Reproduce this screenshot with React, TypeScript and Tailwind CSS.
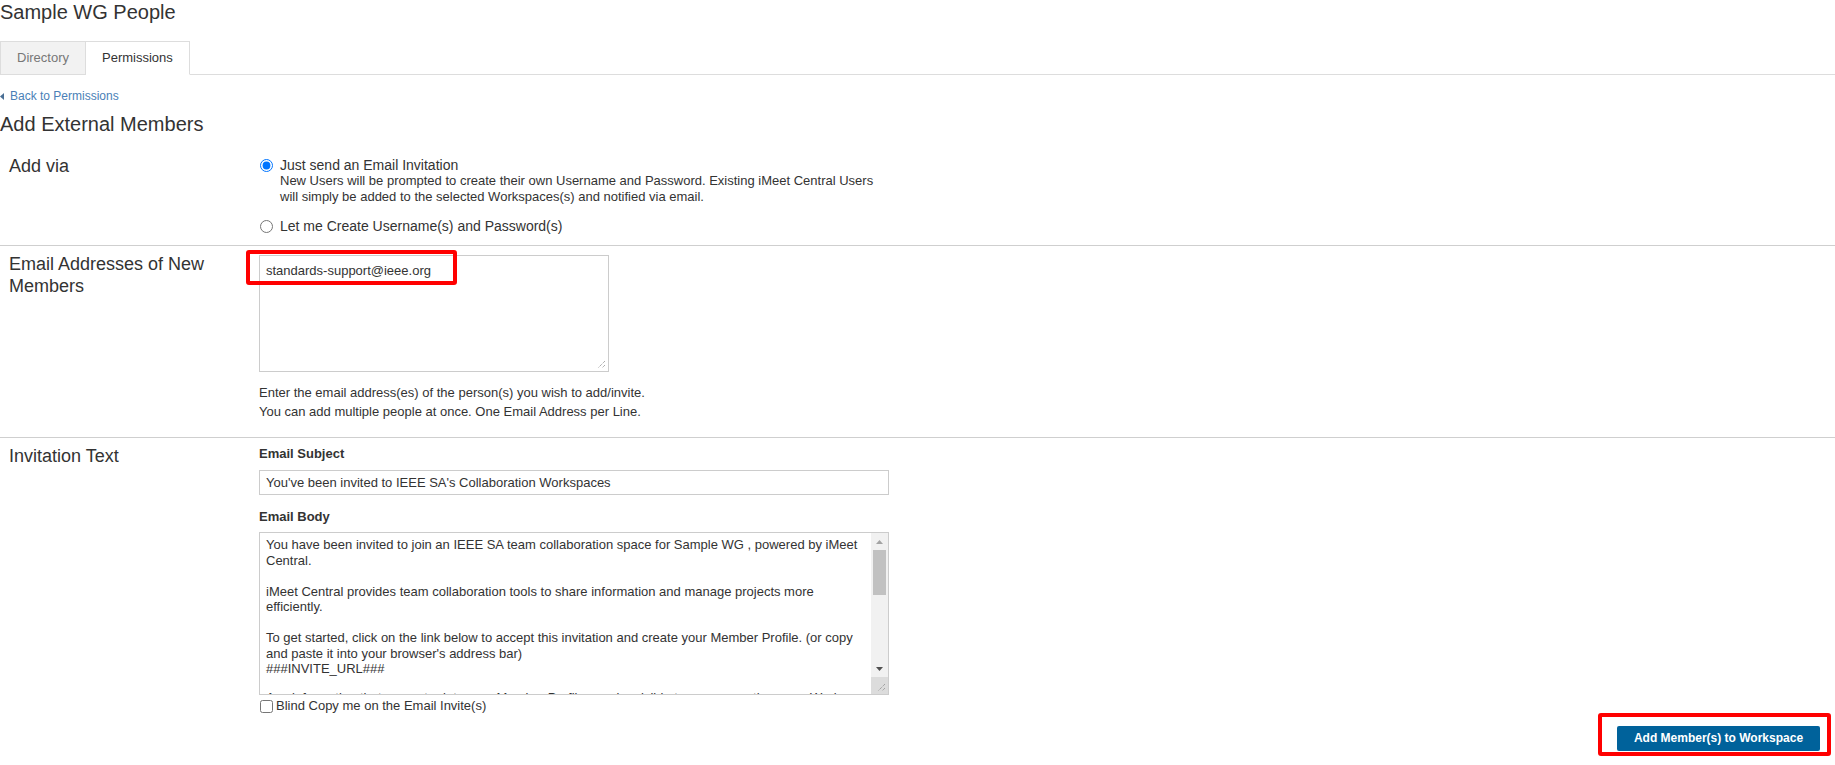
import { useState } from "react";

const FONT = { fontFamily: '"Liberation Sans", Arial, Helvetica, sans-serif' };

const bodyLines = [
  "You have been invited to join an IEEE SA team collaboration space for Sample WG , powered by iMeet",
  "Central.",
  "",
  "iMeet Central provides team collaboration tools to share information and manage projects more",
  "efficiently.",
  "",
  "To get started, click on the link below to accept this invitation and create your Member Profile. (or copy",
  "and paste it into your browser's address bar)",
  "###INVITE_URL###",
];

const Grip = () => (
  <svg width="9" height="9" viewBox="0 0 9 9" className="absolute right-[2px] bottom-[2px]">
    <path d="M8 1 L1 8 M8 5 L5 8" stroke="#8a8a8a" strokeWidth="1" strokeDasharray="1 1" />
  </svg>
);

const Section = ({ label, children, first }: { label: string; children: React.ReactNode; first?: boolean }) => (
  <div className={first ? "flex items-start" : "flex items-start border-t border-[#cfcfcf]"}>
    <div className={first ? "w-[259px] shrink-0 pl-[9px] pr-2 pt-[19px] text-[18px] leading-[22px] text-[#333]" : "w-[259px] shrink-0 pl-[9px] pr-2 pt-[7px] text-[18px] leading-[22px] text-[#333]"}>
      {label}
    </div>
    {children}
  </div>
);

export default function App() {
  const [via, setVia] = useState("email");
  const [bcc, setBcc] = useState(false);

  return (
    <div className="min-h-screen bg-white text-[#333]" style={FONT}>
      <h1 className="text-[20px] leading-6 font-normal">Sample WG People</h1>

      <div className="mt-[17px] flex items-end border-b border-[#ddd]">
        <div className="-mb-px flex h-[34px] items-center border border-[#ddd] bg-[#f2f2f2] px-4 text-[13px] text-[#777]">
          Directory
        </div>
        <div className="-mb-px flex h-[34px] items-center border border-[#ddd] border-b-white border-l-0 bg-white px-4 text-[13px] text-[#333]">
          Permissions
        </div>
      </div>

      <div className="mt-[13px] flex h-4 items-center gap-[6px] text-[12px] text-[#4a7fb7]">
        <svg width="4" height="7" viewBox="0 0 4 7">
          <path d="M4 0 L0 3.5 L4 7 Z" fill="#4a6f95" />
        </svg>
        <span>Back to Permissions</span>
      </div>

      <h2 className="mt-2 text-[20px] leading-6 font-normal">Add External Members</h2>

      <Section label="Add via" first>
        <div className="pt-[21px] pb-[11px]">
          <label className="flex h-4 items-center gap-[7px] text-[14px] leading-4">
            <input
              type="radio"
              name="via"
              checked={via === "email"}
              onChange={() => setVia("email")}
              className="m-0 ml-px h-[13px] w-[13px]"
            />
            Just send an Email Invitation
          </label>
          <p className="ml-[21px] text-[13px] leading-4">
            New Users will be prompted to create their own Username and Password. Existing iMeet Central Users
            <br />
            will simply be added to the selected Workspaces(s) and notified via email.
          </p>
          <label className="mt-[13px] flex h-4 items-center gap-[7px] text-[14px] leading-4">
            <input
              type="radio"
              name="via"
              checked={via === "create"}
              onChange={() => setVia("create")}
              className="m-0 ml-px h-[13px] w-[13px]"
            />
            Let me Create Username(s) and Password(s)
          </label>
        </div>
      </Section>

      <Section label="Email Addresses of New Members">
        <div className="pt-[9px] pb-[16px]">
          <div className="relative h-[117px] w-[350px] border border-[#ccc] bg-white px-[6px] pt-[7px] text-[13px] leading-4">
            standards-support@ieee.org
            <Grip />
            <div className="pointer-events-none absolute -left-[14px] -top-[6px] h-[35px] w-[211px] rounded-[3px] border-4 border-[#ff0000]" />
          </div>
          <p className="mt-[11px] text-[13px] leading-[19px]">
            Enter the email address(es) of the person(s) you wish to add/invite.
            <br />
            You can add multiple people at once. One Email Address per Line.
          </p>
        </div>
      </Section>

      <Section label="Invitation Text">
        <div className="pt-[8px]">
          <div className="text-[13px] leading-4 font-bold">Email Subject</div>
          <div className="mt-2 flex h-[25px] w-[630px] items-center border border-[#ccc] px-[6px] text-[13px]">
            You've been invited to IEEE SA's Collaboration Workspaces
          </div>
          <div className="mt-[14px] text-[13px] leading-4 font-bold">Email Body</div>
          <div className="mt-[7px] flex h-[163px] w-[630px] border border-[#ccc]">
            <div className="flex-1 overflow-hidden px-[6px] pt-[4px] text-[13px] leading-[15.5px]">
              {bodyLines.map((l, i) => (
                <div key={i} className="h-[15.5px] whitespace-nowrap">
                  {l}
                </div>
              ))}
              <div className="h-[13px]" />
              <div className="whitespace-nowrap">
                Any information that you enter into your Member Profile may be visible to anyone on the same Workspace.
              </div>
            </div>
            <div className="flex w-[17px] shrink-0 flex-col bg-[#f1f1f1]">
              <div className="flex h-[17px] items-center justify-center">
                <svg width="7" height="4" viewBox="0 0 7 4">
                  <path d="M0 4 L3.5 0 L7 4 Z" fill="#a3a3a3" />
                </svg>
              </div>
              <div className="mx-[2px] h-[45px] bg-[#c1c1c1]" />
              <div className="flex-1" />
              <div className="flex h-[17px] items-center justify-center">
                <svg width="7" height="4" viewBox="0 0 7 4">
                  <path d="M0 0 L3.5 4 L7 0 Z" fill="#505050" />
                </svg>
              </div>
              <div className="relative h-[17px] bg-[#dcdcdc]">
                <Grip />
              </div>
            </div>
          </div>
          <label className="mt-1 flex h-[14px] items-center gap-[3px] text-[13px]">
            <input
              type="checkbox"
              checked={bcc}
              onChange={() => setBcc(!bcc)}
              className="m-0 ml-px h-[13px] w-[13px]"
            />
            Blind Copy me on the Email Invite(s)
          </label>
        </div>
      </Section>

      <div className="mt-[12px] flex justify-end pr-[15px]">
        <div className="relative">
          <button className="h-[25px] w-[203px] rounded-[2px] bg-[#00629b] text-[12px] font-bold text-white">
            Add Member(s) to Workspace
          </button>
          <div className="pointer-events-none absolute -left-[19px] -top-[12px] h-[43px] w-[233px] rounded-[3px] border-4 border-[#ff0000]" />
        </div>
      </div>
    </div>
  );
}
